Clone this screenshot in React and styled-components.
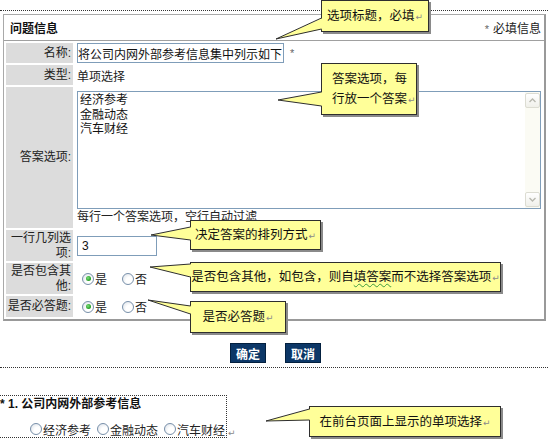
import React from "react";
import styled, { createGlobalStyle } from "styled-components";

const GlobalStyle = createGlobalStyle`
  html, body { margin: 0; padding: 0; background: #fff; }
  body {
    font-family: "Liberation Sans", "Noto Sans CJK SC", sans-serif;
    font-size: 12px;
    color: #222;
  }
`;

const Page = styled.div`
  position: relative;
  width: 548px;
  height: 440px;
  padding-top: 10px;
  box-sizing: border-box;
  overflow: hidden;
`;

const DottedRule = styled.div`
  border-top: 1px dotted #333;
  margin-top: ${(p) => p.$gap || 0}px;
`;

const Panel = styled.div`
  margin: 3px 2px 0 3px;
  border: 1px solid #a9a9a9;
  border-right: 2px solid #999;
  border-bottom: 2px solid #999;
`;

const PanelHead = styled.div`
  display: flex;
  justify-content: space-between;
  align-items: center;
  height: 25px;
  padding: 0 3px 0 6px;
  border-bottom: 1px solid #a0a0a0;
`;

const PanelTitle = styled.span`
  font-weight: bold;
  color: #111;
`;

const Star = styled.span`
  color: #666;
  font-size: 11px;
  margin-right: ${(p) => p.$right || 0}px;
  margin-left: ${(p) => p.$left || 0}px;
`;

const FormGrid = styled.div`
  display: grid;
  grid-template-columns: 67px 1fr;
  grid-template-rows: 20px 20px 141px 31px 31px 21px;
  gap: 2px;
  padding: 2px;
`;

const Label = styled.div`
  background: #dcdcdc;
  display: grid;
  align-content: center;
  text-align: right;
  padding-right: 2px;
  line-height: 15px;
  color: #222;
  white-space: ${(p) => (p.$nowrap ? "nowrap" : "normal")};
`;

const Value = styled.div`
  display: flex;
  align-items: center;
  padding-left: 2px;
`;

const AnswerValue = styled.div`
  display: flex;
  flex-direction: column;
  padding: 4px 1px 0 2px;
`;

const TextInput = styled.div`
  box-sizing: border-box;
  width: ${(p) => p.$w}px;
  height: 20px;
  border: 1px solid #7f9db9;
  overflow: hidden;
  white-space: nowrap;
  display: flex;
  align-items: center;
  justify-content: ${(p) => (p.$end ? "flex-end" : "flex-start")};
  padding: 0 ${(p) => (p.$end ? 1 : 4)}px;
  color: #111;
`;

const TextArea = styled.div`
  box-sizing: border-box;
  height: 118px;
  border: 1px solid #7f9db9;
  display: flex;
`;

const AreaLines = styled.div`
  flex: 1;
  padding: 1px 2px;
  line-height: 14.5px;
  color: #111;
`;

const ScrollTrack = styled.div`
  width: 15px;
  background: #fbfbf4;
  display: flex;
  flex-direction: column;
  justify-content: space-between;
  padding: 1px 0;
`;

const ScrollButton = styled.div`
  height: 15px;
  box-sizing: border-box;
  border: 1px solid #dcdcd2;
  border-radius: 2px;
  background: linear-gradient(#ffffff, #f0f0ea);
  display: flex;
  align-items: center;
  justify-content: center;
`;

const HelpText = styled.div`
  line-height: 14px;
  margin-top: 1px;
  color: #222;
`;

const RadioRow = styled.div`
  display: flex;
  align-items: center;
  padding-left: ${(p) => p.$indent || 0}px;
  gap: ${(p) => p.$gap}px;
`;

const RadioItem = styled.span`
  display: inline-flex;
  align-items: center;
  gap: 1px;
`;

const RadioDot = styled.span`
  box-sizing: border-box;
  width: 12px;
  height: 12px;
  border-radius: 50%;
  border: 1px solid #7890aa;
  background: radial-gradient(circle at 65% 65%, #ffffff 35%, #d8dee6 100%);
  display: inline-flex;
  align-items: center;
  justify-content: center;

  &::after {
    content: "";
    width: 5px;
    height: 5px;
    border-radius: 50%;
    background: radial-gradient(circle at 40% 40%, #7ee07e, #1f9a1f 70%);
    display: ${(p) => (p.$on ? "block" : "none")};
  }
`;

const ButtonRow = styled.div`
  display: flex;
  justify-content: center;
  gap: 19px;
  margin-top: 22px;
  padding-left: 3px;
`;

const Button = styled.div`
  box-sizing: border-box;
  width: 36px;
  height: 20px;
  background: #0c3767;
  border: 1px solid #03203f;
  color: #fff;
  font-weight: bold;
  display: flex;
  align-items: center;
  justify-content: center;
`;

const PreviewRow = styled.div`
  display: flex;
  align-items: flex-end;
  margin-top: 27px;
`;

const PreviewBox = styled.div`
  box-sizing: border-box;
  margin-left: -3px;
  width: 230px;
  height: 43px;
  border: 1px dotted #333;
  padding-left: 2px;
`;

const PreviewTitle = styled.div`
  font-weight: bold;
  line-height: 14px;
  margin-top: 1px;
  color: #111;
  white-space: nowrap;
`;

const PreviewOptions = styled(RadioRow)`
  margin-top: 11px;
  height: 14px;
`;

const ParaMark = styled.span`
  font-family: "DejaVu Sans", sans-serif;
  font-size: 9px;
  color: #8a8a8a;
  margin-left: 1px;
`;

const CalloutBox = styled.div`
  position: absolute;
  left: ${(p) => p.$x}px;
  top: ${(p) => p.$y}px;
  width: ${(p) => p.$w}px;
  height: ${(p) => p.$h}px;
  box-sizing: border-box;
  background: #ffff99;
  border: 1px solid #2e2e2e;
  box-shadow: 2px 2px 0 #8a8a8a;
  display: flex;
  align-items: center;
  justify-content: ${(p) => (p.$left ? "flex-start" : "center")};
  padding-left: ${(p) => (p.$left ? 10 : 0)}px;
  line-height: 20px;
  font-size: 12.5px;
  color: #111;
  font-family: "Noto Sans CJK SC", sans-serif;
  white-space: nowrap;
`;

const Pointer = styled.svg`
  position: absolute;
  overflow: visible;
`;

const Wavy = styled.span`
  text-decoration: underline wavy #3c9c3c;
  text-decoration-thickness: 1px;
  text-underline-offset: 2px;
`;

const Chevron = ({ up }) => (
  <svg width="7" height="5" viewBox="0 0 7 5">
    <polyline
      points={up ? "0.5,4 3.5,1 6.5,4" : "0.5,1 3.5,4 6.5,1"}
      fill="none"
      stroke="#b9b9b0"
      strokeWidth="1.4"
    />
  </svg>
);

const Callout = ({ x, y, w, h, tip, base, left, children }) => {
  const ox = Math.min(tip[0], x) - 2;
  const oy = Math.min(tip[1], base[0]) - 2;
  const pw = x + 3 - ox;
  const ph = Math.max(tip[1], base[1]) + 2 - oy;
  const p = (px, py) => `${px - ox},${py - oy}`;
  return (
    <>
      <CalloutBox $x={x} $y={y} $w={w} $h={h} $left={left}>
        <div>{children}</div>
      </CalloutBox>
      <Pointer style={{ left: ox, top: oy }} width={pw} height={ph}>
        <polygon
          points={`${p(x + 1.6, base[0])} ${p(tip[0], tip[1])} ${p(x + 1.6, base[1])}`}
          fill="#ffff99"
        />
        <polyline
          points={`${p(x + 0.5, base[0])} ${p(tip[0], tip[1])} ${p(x + 0.5, base[1])}`}
          fill="none"
          stroke="#2e2e2e"
          strokeWidth="1"
        />
      </Pointer>
    </>
  );
};

const Radios = ({ value }) => (
  <RadioRow $indent={5} $gap={15}>
    <RadioItem>
      <RadioDot $on={value} />是
    </RadioItem>
    <RadioItem>
      <RadioDot $on={!value} />否
    </RadioItem>
  </RadioRow>
);

export default function App() {
  return (
    <Page>
      <GlobalStyle />
      <DottedRule />
      <Panel>
        <PanelHead>
          <PanelTitle>问题信息</PanelTitle>
          <span>
            <Star $right={4}>*</Star>必填信息
          </span>
        </PanelHead>
        <FormGrid>
          <Label>名称:</Label>
          <Value>
            <TextInput $w={207} $end>
              请将公司内网外部参考信息集中列示如下
            </TextInput>
            <Star $left={6}>*</Star>
          </Value>

          <Label>类型:</Label>
          <Value>单项选择</Value>

          <Label>答案选项:</Label>
          <AnswerValue>
            <TextArea>
              <AreaLines>
                经济参考
                <br />
                金融动态
                <br />
                汽车财经
              </AreaLines>
              <ScrollTrack>
                <ScrollButton>
                  <Chevron up />
                </ScrollButton>
                <ScrollButton>
                  <Chevron />
                </ScrollButton>
              </ScrollTrack>
            </TextArea>
            <HelpText>每行一个答案选项，空行自动过滤</HelpText>
          </AnswerValue>

          <Label>一行几列选项:</Label>
          <Value>
            <TextInput $w={80}>3</TextInput>
          </Value>

          <Label>是否包含其他:</Label>
          <Value>
            <Radios value />
          </Value>

          <Label $nowrap>是否必答题:</Label>
          <Value>
            <Radios value />
          </Value>
        </FormGrid>
      </Panel>

      <ButtonRow>
        <Button>确定</Button>
        <Button>取消</Button>
      </ButtonRow>
      <DottedRule $gap={4} />

      <PreviewRow>
        <PreviewBox>
          <PreviewTitle>* 1. 公司内网外部参考信息</PreviewTitle>
          <PreviewOptions $indent={30} $gap={6}>
            <RadioItem>
              <RadioDot />经济参考
            </RadioItem>
            <RadioItem>
              <RadioDot />金融动态
            </RadioItem>
            <RadioItem>
              <RadioDot />汽车财经
            </RadioItem>
          </PreviewOptions>
        </PreviewBox>
        <ParaMark>↵</ParaMark>
      </PreviewRow>

      <Callout x={321} y={0} w={108} h={32} tip={[276, 39]} base={[18, 29]}>
        选项标题，必填<ParaMark>↵</ParaMark>
      </Callout>
      <Callout x={321} y={63} w={96} h={52} tip={[278, 100]} base={[92, 106]} left>
        答案选项，每
        <br />
        行放一个答案<ParaMark>↵</ParaMark>
      </Callout>
      <Callout x={190} y={220} w={131} h={30} tip={[151, 235]} base={[227, 240]}>
        决定答案的排列方式<ParaMark>↵</ParaMark>
      </Callout>
      <Callout x={190} y={262} w={311} h={30} tip={[150, 267]} base={[264, 277]}>
        是否包含其他，如包含，则自<Wavy>填答案</Wavy>而不选择答案选项<ParaMark>↵</ParaMark>
      </Callout>
      <Callout x={190} y={301} w={96} h={32} tip={[148, 300]} base={[306, 314]}>
        是否必答题<ParaMark>↵</ParaMark>
      </Callout>
      <Callout x={309} y={406} w={192} h={31} tip={[266, 421]} base={[409, 420]}>
        在前台页面上显示的单项选择<ParaMark>↵</ParaMark>
      </Callout>
    </Page>
  );
}
